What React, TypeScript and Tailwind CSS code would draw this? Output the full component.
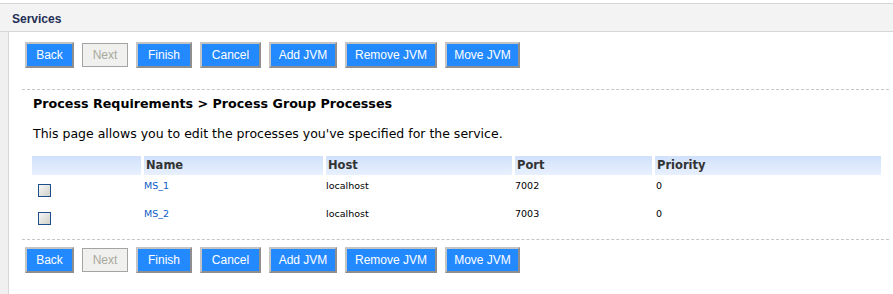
import React from 'react';

type Proc = {
  name: string;
  host: string;
  port: string;
  priority: string;
};

const processes: Proc[] = [
  { name: 'MS_1', host: 'localhost', port: '7002', priority: '0' },
  { name: 'MS_2', host: 'localhost', port: '7003', priority: '0' },
];

const buttons: { label: string; w: string }[] = [
  { label: 'Back', w: 'w-[49px]' },
  { label: 'Next', w: 'w-[46px]' },
  { label: 'Finish', w: 'w-[56px]' },
  { label: 'Cancel', w: 'w-[61px]' },
  { label: 'Add JVM', w: 'w-[68px]' },
  { label: 'Remove JVM', w: 'w-[92px]' },
  { label: 'Move JVM', w: 'w-[75px]' },
];

function ButtonBar() {
  return (
    <div className="flex items-center gap-[8px] h-[26px]">
      {buttons.map(({ label, w }) =>
        label === 'Next' ? (
          <button
            key={label}
            disabled
            className={`${w} h-[24px] bg-[#f0f0ee] border border-[#a4a4a4] text-[#a8a89c] text-[12px] leading-none font-['Liberation_Sans',Arial,sans-serif]`}
          >
            {label}
          </button>
        ) : (
          <button
            key={label}
            className={`${w} h-[26px] bg-[#2389ff] border-2 border-t-[#c4c4c4] border-l-[#c4c4c4] border-b-[#8e8e8e] border-r-[#8e8e8e] text-white text-[12px] leading-none font-['Liberation_Sans',Arial,sans-serif]`}
          >
            {label}
          </button>
        )
      )}
    </div>
  );
}

export default function App() {
  return (
    <div className="w-[893px] h-[294px] bg-white pt-[3px] overflow-hidden font-['DejaVu_Sans',Verdana,sans-serif]">
      {/* Panel header */}
      <div className="h-[29px] bg-[#f3f3f3] border-t border-b border-[#d6d6d6] flex items-center pl-[12px] pt-[3px]">
        <span className="text-[12px] font-bold text-[#1f2f55] font-['Liberation_Sans',Arial,sans-serif]">Services</span>
      </div>

      <div className="flex h-[262px]">
        {/* left gutter */}
        <div className="w-[9px] bg-[#f0f0f0] border-r border-[#d8d8d8]" />

        <div className="flex-1 pt-[10px]">
          <div className="pl-[16px]">
            <ButtonBar />
          </div>

          <div className="ml-[13px] mr-[4px] mt-[21px] border-t border-b border-dashed border-[#c6c6c6] pl-[11px] pt-[6px] pb-[8px]">
            <h2 className="text-[12.7px] font-bold text-black leading-[16px]">
              Process Requirements &gt; Process Group Processes
            </h2>
            <p className="mt-[14px] text-[12.5px] text-black leading-[15px]">
              This page allows you to edit the processes you've specified for the service.
            </p>

            <div className="mt-[15px] ml-[-1px] grid grid-cols-[109px_179px_186px_137px_226px] gap-x-[3px]">
              <div className="h-[19px] bg-gradient-to-b from-[#d1e1fb] to-[#e8f0fd]" />
              {['Name', 'Host', 'Port', 'Priority'].map((h) => (
                <div
                  key={h}
                  className="h-[19px] bg-gradient-to-b from-[#d1e1fb] to-[#e8f0fd] pl-[2px] text-[11.5px] font-bold text-[#333333] leading-[19px]"
                >
                  {h}
                </div>
              ))}

              {processes.map((p) => (
                <React.Fragment key={p.name}>
                  <div className="h-[28px] pl-[6px] pt-[9px]">
                    <div className="w-[13px] h-[13px] border border-[#1c4f8c] bg-gradient-to-br from-[#f6f6f6] to-[#d2d2ca]" />
                  </div>
                  <div className="h-[28px] pt-[5px] text-[9.5px] leading-[12px]">
                    <a href="#" className="text-[#0a5cc8]">{p.name}</a>
                  </div>
                  <div className="h-[28px] pt-[5px] text-[9.5px] leading-[12px] text-black">{p.host}</div>
                  <div className="h-[28px] pt-[5px] text-[9.5px] leading-[12px] text-black">{p.port}</div>
                  <div className="h-[28px] pt-[5px] pl-[1px] text-[9.5px] leading-[12px] text-black">{p.priority}</div>
                </React.Fragment>
              ))}
            </div>
          </div>

          <div className="pl-[16px] pt-[7px]">
            <ButtonBar />
          </div>
        </div>
      </div>
    </div>
  );
}
